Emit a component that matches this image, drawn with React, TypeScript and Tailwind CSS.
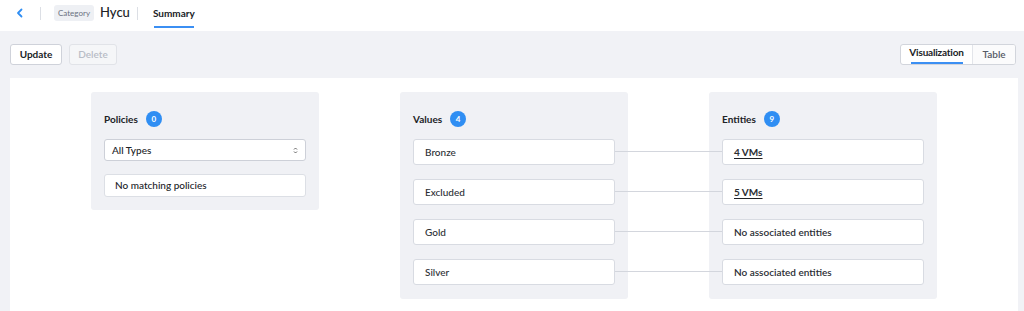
import React from "react";

const font = { fontFamily: "Lato, 'Open Sans', sans-serif" };

function Badge({ n }: { n: number }) {
  return (
    <span className="ml-[8px] inline-flex h-[16px] w-[16px] items-center justify-center rounded-full bg-[#2f8ef3] text-[8px] font-bold text-white">
      {n}
    </span>
  );
}

function Box({ children, className = "" }: { children: React.ReactNode; className?: string }) {
  return (
    <div className={`flex h-[26px] items-center rounded-[3px] border border-[#d8dbe2] bg-white pl-[11px] text-[10px] font-medium text-[#2b2e34] ${className}`}>
      {children}
    </div>
  );
}

export default function App() {
  const values = ["Bronze", "Excluded", "Gold", "Silver"];
  const entities: { t: string; link: boolean }[] = [
    { t: "4 VMs", link: true },
    { t: "5 VMs", link: true },
    { t: "No associated entities", link: false },
    { t: "No associated entities", link: false },
  ];
  return (
    <div style={font} className="h-[311px] w-[1024px] overflow-hidden bg-[#f1f2f6]">
      {/* header */}
      <div className="flex h-[31px] items-center bg-white pl-[16px]">
        <svg width="8" height="10" viewBox="0 0 8 10" className="mb-[5px]">
          <path d="M5.5 1.5 L2 5 L5.5 8.5" fill="none" stroke="#2f8ef3" strokeWidth="1.8" strokeLinecap="round" strokeLinejoin="round" />
        </svg>
        <div className="ml-[16px] mb-[5px] h-[13px] w-px bg-[#dcdfe5]" />
        <span className="ml-[13px] mb-[5px] rounded-[3px] bg-[#eef0f4] px-[4px] py-[3px] text-[8px] leading-[10px] text-[#6b7080]">
          Category
        </span>
        <span className="ml-[6px] mb-[5px] text-[13px] font-medium text-[#202226]">Hycu</span>
        <div className="ml-[7px] mb-[5px] h-[13px] w-px bg-[#dcdfe5]" />
        <div className="ml-[14px] flex h-full flex-col items-center justify-center">
          <span className="mt-[2px] px-px text-[10px] font-bold text-[#202226]">Summary</span>
          <div className="mt-[5px] h-[2px] w-[40px] bg-[#3b8ff3]" />
        </div>
      </div>

      {/* toolbar */}
      <div className="flex items-center justify-between pl-[10px] pr-[8px] pt-[13px]">
        <div className="flex gap-[7px]">
          <button className="h-[21px] w-[52px] rounded-[3px] border border-[#cfd2da] bg-white text-[10px] font-bold text-[#202226]">
            Update
          </button>
          <button className="h-[21px] w-[48px] rounded-[3px] border border-[#e1e3e8] bg-[#f5f6f8] text-[10px] font-semibold text-[#b8bcc6]">
            Delete
          </button>
        </div>
        <div className="flex h-[21px] w-[116px] overflow-hidden rounded-[3px] border border-[#d2d5dc] bg-white">
          <div className="flex flex-1 flex-col items-center justify-end">
            <span className="text-[10px] font-bold tracking-[-0.2px] text-[#202226]">Visualization</span>
            <div className="mt-[2px] h-[2px] w-[52px] bg-[#3b8ff3]" />
          </div>
          <div className="w-px bg-[#e3e5ea]" />
          <div className="flex w-[42px] items-center justify-center bg-[#fbfbfc] text-[10px] font-semibold text-[#555a66]">Table</div>
        </div>
      </div>

      {/* main panel */}
      <div className="mx-[10px] mt-[13px] flex h-[240px] w-[1008px] items-start justify-evenly bg-white pt-[14px]">
        {/* Policies */}
        <div className="w-[228px] rounded-[3px] bg-[#f0f1f5] px-[13px] pb-[13px] pt-[19px]">
          <div className="flex items-center text-[10px] font-bold text-[#202226]">
            Policies <Badge n={0} />
          </div>
          <div className="mt-[12px] flex h-[22px] items-center justify-between rounded-[3px] border border-[#cdd0d8] bg-white px-[7px] text-[10px] font-medium text-[#202226]">
            All Types
            <svg width="5" height="7" viewBox="0 0 5 7">
              <path d="M1 2.5 L2.5 1 L4 2.5 M1 4.5 L2.5 6 L4 4.5" fill="none" stroke="#555" strokeWidth="0.9" />
            </svg>
          </div>
          <div className="mt-[13px] flex h-[23px] items-center rounded-[3px] border border-[#dcdfe5] bg-white pl-[10px] text-[10px] font-medium text-[#202226]">
            No matching policies
          </div>
        </div>

        {/* Values */}
        <div className="relative w-[228px] rounded-[3px] bg-[#f0f1f5] px-[13px] pb-[14px] pt-[19px]">
          <div className="flex items-center text-[10px] font-bold text-[#202226]">
            Values <Badge n={4} />
          </div>
          <div className="mt-[12px] flex flex-col gap-[14px]">
            {values.map((v) => (
              <div key={v} className="relative">
                <Box>{v}</Box>
                <div className="absolute left-[202px] top-[12px] h-px w-[107px] bg-[#d3d6dd]" />
              </div>
            ))}
          </div>
        </div>

        {/* Entities */}
        <div className="w-[228px] rounded-[3px] bg-[#f0f1f5] px-[13px] pb-[14px] pt-[19px]">
          <div className="flex items-center text-[10px] font-bold text-[#202226]">
            Entities <Badge n={9} />
          </div>
          <div className="mt-[12px] flex flex-col gap-[14px]">
            {entities.map((e, i) => (
              <Box key={i}>
                {e.link ? (
                  <span className="font-bold underline decoration-[#202226] underline-offset-2">{e.t}</span>
                ) : (
                  <span className="font-semibold">{e.t}</span>
                )}
              </Box>
            ))}
          </div>
        </div>
      </div>
    </div>
  );
}
